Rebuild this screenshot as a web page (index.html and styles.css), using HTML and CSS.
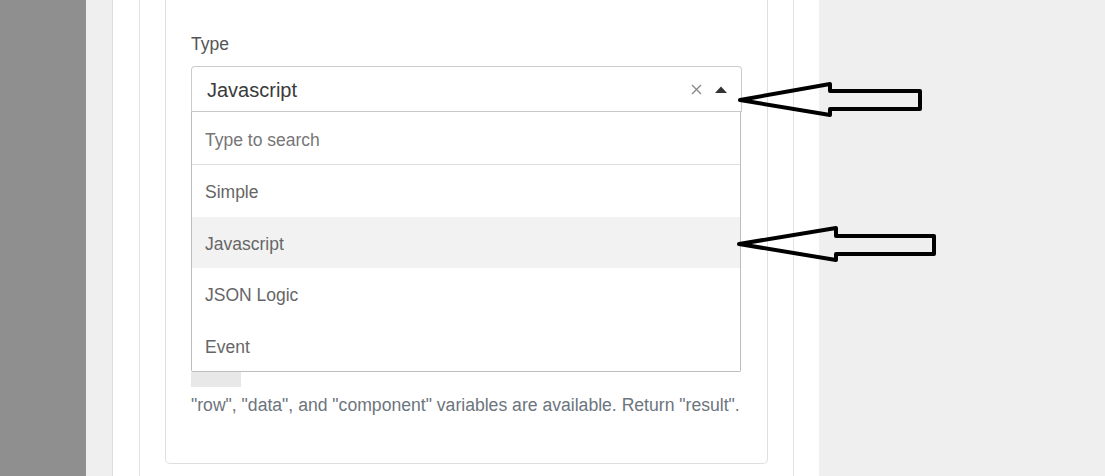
FILE: index.html
```html
<!DOCTYPE html>
<html lang="en">
<head>
<meta charset="utf-8">
<title>Type select</title>
<link rel="stylesheet" href="styles.css">
</head>
<body>
<div class="page">
  <div class="sidebar"></div>
  <div class="main">
    <div class="panel-outer">
      <div class="panel-inner">
        <div class="card">
          <label class="field-label">Type</label>
          <div class="select">
            <span class="select-value">Javascript</span>
            <span class="select-clear">
              <svg width="11" height="11" viewBox="0 0 11 11"><path d="M1 1 L10 10 M10 1 L1 10" stroke="#8a8a8a" stroke-width="1.4" fill="none"/></svg>
            </span>
            <span class="select-caret">
              <svg width="12" height="7" viewBox="0 0 12 7"><path d="M0 7 L6 0.5 L12 7 Z" fill="#333"/></svg>
            </span>
          </div>
          <div class="dropdown">
            <div class="dropdown-search">Type to search</div>
            <div class="dropdown-item">Simple</div>
            <div class="dropdown-item is-highlighted">Javascript</div>
            <div class="dropdown-item">JSON Logic</div>
            <div class="dropdown-item">Event</div>
          </div>
          <div class="editor-stub"></div>
          <p class="help-text">"row", "data", and "component" variables are available. Return "result".</p>
        </div>
      </div>
    </div>
  </div>
  <svg class="annotations" width="1105" height="476" viewBox="0 0 1105 476">
    <polygon points="740,100 830,84 830,91 920,91 920,109 830,109 830,115" fill="none" stroke="#000" stroke-width="4" stroke-linejoin="round"/>
    <polygon points="739,244 836,228 836,236 934,236 934,254 836,254 836,260" fill="none" stroke="#000" stroke-width="4" stroke-linejoin="round"/>
  </svg>
</div>
</body>
</html>
```
FILE: styles.css
```css
* { box-sizing: border-box; }
html, body { margin: 0; padding: 0; }
body {
  font-family: "Liberation Sans", Arial, sans-serif;
  background: #efefef;
  overflow: hidden;
}
.page {
  position: relative;
  display: flex;
  width: 1105px;
  height: 476px;
  overflow: hidden;
}
.sidebar {
  width: 86px;
  flex: none;
  background: #8f8f8f;
}
.main {
  flex: 1;
  background: #efefef;
  padding-left: 26px;
}
.panel-outer {
  width: 707px;
  height: 100%;
  background: #fff;
  border-left: 1px solid #dcdcdc;
  padding: 0 25px 0 26px;
}
.panel-inner {
  width: 655px;
  height: 100%;
  border-left: 1px solid #e2e2e2;
  border-right: 1px solid #e2e2e2;
  padding: 0 25px;
}
.card {
  width: 603px;
  height: 464px;
  border: 1px solid #dfdfdf;
  border-top: none;
  border-radius: 0 0 5px 5px;
  padding: 32px 25px 0;
}
.field-label {
  display: block;
  font-size: 17.5px;
  line-height: 25.5px;
  color: #555;
  margin-bottom: 8.5px;
}
.select {
  display: flex;
  align-items: center;
  height: 46px;
  border: 1px solid #ccc;
  border-bottom-color: #c8c8c8;
  border-radius: 4px 4px 0 0;
  padding: 0 14px 0 15px;
}
.select-value {
  flex: 1;
  font-size: 20px;
  color: #3a3a3a;
  padding-top: 2px;
}
.select-clear {
  display: flex;
  margin-right: 13px;
}
.select-caret {
  display: flex;
}
.dropdown {
  border: 1px solid #bdbdbd;
  border-top: none;
  border-radius: 0 0 2px 2px;
  margin-right: 1px;
}
.dropdown-search {
  height: 53px;
  display: flex;
  align-items: center;
  padding: 4px 0 0 13px;
  font-size: 17.5px;
  color: #767676;
  border-bottom: 1px solid #dedede;
}
.dropdown-item {
  height: 51.5px;
  display: flex;
  align-items: center;
  padding: 4px 0 0 13px;
  font-size: 17.5px;
  color: #666;
}
.dropdown-item.is-highlighted {
  background: #f2f2f2;
}
.editor-stub {
  width: 50px;
  height: 15px;
  background: #e8e8e8;
}
.help-text {
  margin: 6px 0 0;
  font-size: 17.6px;
  line-height: 25.5px;
  color: #6c757d;
  white-space: nowrap;
}
.annotations {
  position: absolute;
  left: 0;
  top: 0;
  pointer-events: none;
}
```
